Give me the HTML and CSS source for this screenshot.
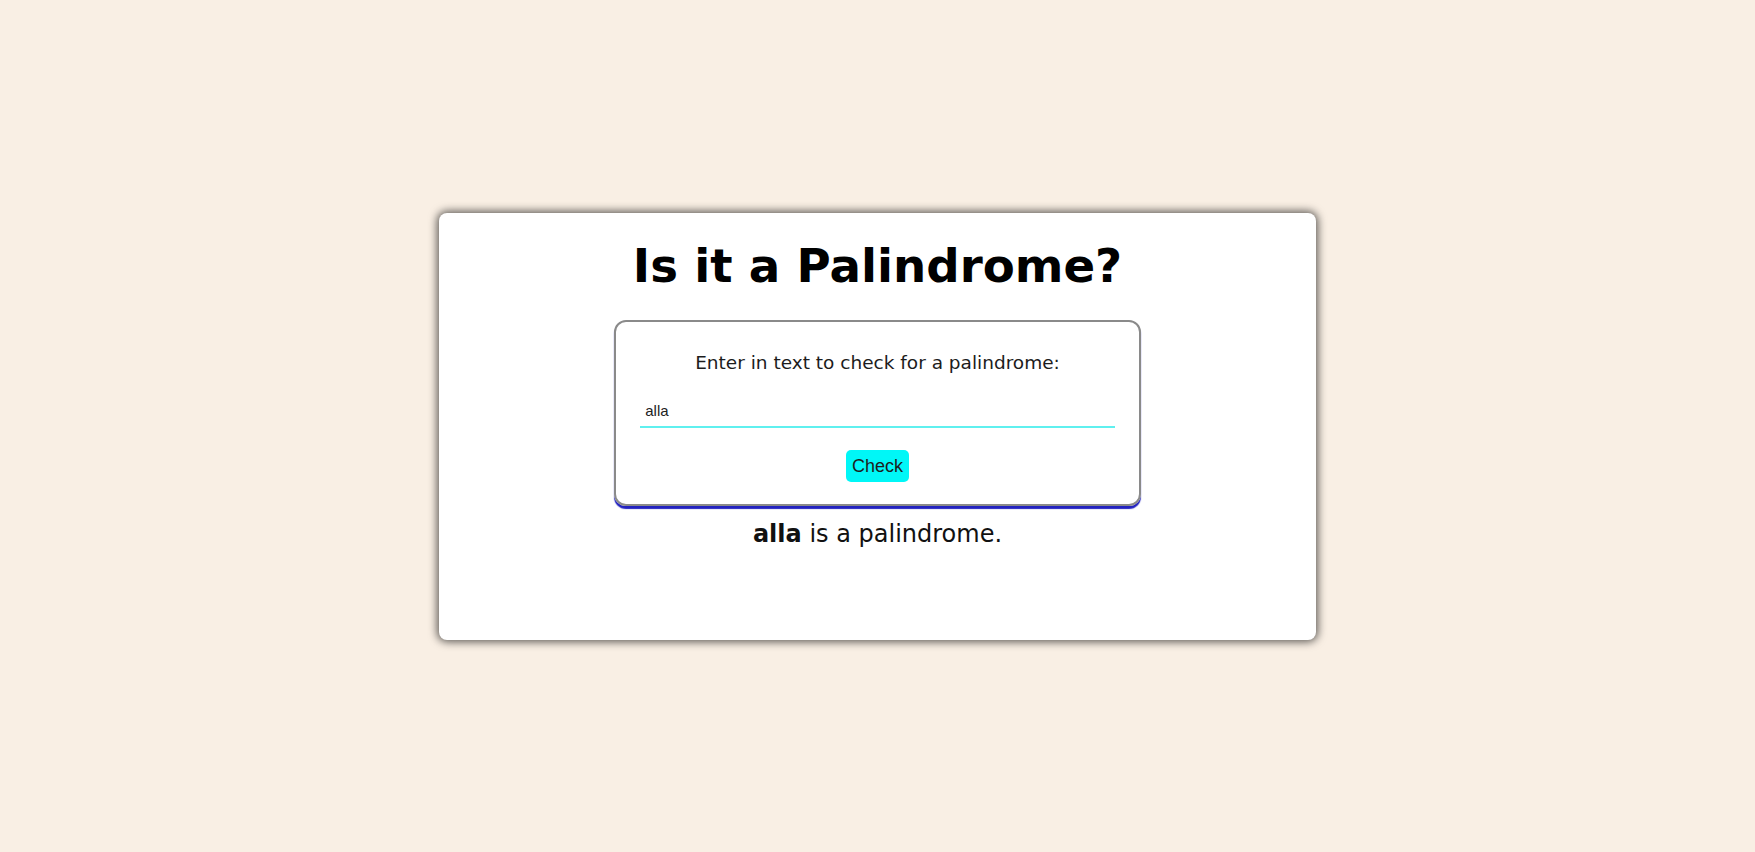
FILE: index.html
```html
<!DOCTYPE html>
<html lang="en">
<head>
<meta charset="utf-8">
<title>Palindrome Checker</title>
<link rel="stylesheet" href="styles.css">
</head>
<body>
<main class="card">
  <h1 class="title">Is it a Palindrome?</h1>
  <div class="checker">
    <label class="prompt" for="text-input">Enter in text to check for a palindrome:</label>
    <input class="text-input" id="text-input" type="text" value="alla">
    <button class="check-btn" type="button">Check</button>
  </div>
  <p class="result"><strong>alla</strong> is a palindrome.</p>
</main>
</body>
</html>
```

FILE: styles.css
```css
* { box-sizing: border-box; }

html, body {
  margin: 0;
  height: 100%;
}

body {
  background: #f9efe4;
  display: flex;
  align-items: center;
  justify-content: center;
  font-family: "DejaVu Sans", Verdana, sans-serif;
}

.card {
  width: 50%;
  height: 427px;
  background: #ffffff;
  border-radius: 8px;
  box-shadow: 0 0 9px 2px rgba(0, 0, 0, 0.62);
  display: flex;
  flex-direction: column;
  align-items: center;
  padding-top: 26px;
}

.title {
  margin: 0;
  font-size: 46.7px;
  font-weight: bold;
  color: #000;
  line-height: normal;
}

.checker {
  margin-top: 27px;
  width: 60%;
  border: 2px solid #8a8a8a;
  border-radius: 12px;
  box-shadow: 0 3px 1px #2222c0;
  display: flex;
  flex-direction: column;
  align-items: center;
  padding: 30px 24px 22px;
}

.prompt {
  font-size: 18.5px;
  color: #1c1c1c;
  line-height: normal;
}

.text-input {
  margin-top: 27px;
  width: 100%;
  border: none;
  border-bottom: 2px solid #5ff0ef;
  outline: none;
  padding: 2px 5px 7px;
  font-family: "Liberation Sans", Arial, sans-serif;
  font-size: 15px;
  color: #222;
  background: transparent;
}

.check-btn {
  margin-top: 22px;
  background: #00f7f7;
  border: none;
  border-radius: 5px;
  padding: 6px 6px 5px;
  font-family: "Liberation Sans", Arial, sans-serif;
  font-size: 18px;
  color: #1d1d1d;
  line-height: normal;
}

.result {
  margin: 14px 0 0;
  font-size: 24px;
  color: #111;
  line-height: normal;
}
```
